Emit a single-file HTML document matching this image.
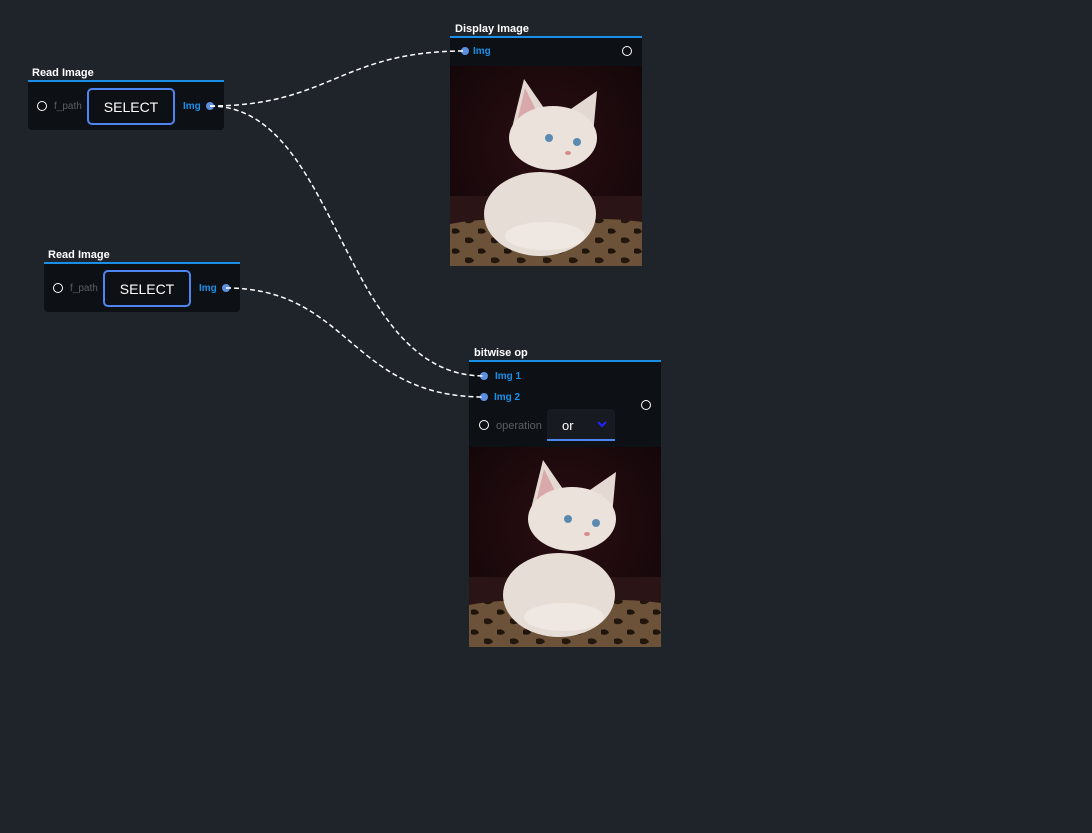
<!DOCTYPE html>
<html><head><style>
body{margin:0;width:1092px;height:833px;background:#1f232a;font-family:"Liberation Sans",sans-serif;position:relative;overflow:hidden}
.t{position:absolute;color:#fff;font-size:11px;font-weight:bold}
.line{position:absolute;height:2px;background:#1a8fe8}
.body{position:absolute;background:#0d1115;border-radius:0 0 4px 4px}
.circ{position:absolute;width:10px;height:10px;border:1.5px solid #fff;border-radius:50%;box-sizing:border-box}
.dot{position:absolute;width:8px;height:8px;background:#5c8fe0;border-radius:50%}
.lbl{position:absolute;font-size:10px;color:#5a5f66}
.blu{position:absolute;font-size:10px;color:#1a8fe8;font-weight:bold}
.btn{position:absolute;border:2px solid #4d86f0;border-radius:5px;color:#fff;font-size:14px;display:flex;align-items:center;justify-content:center;box-sizing:border-box}
svg.wires{position:absolute;left:0;top:0}
</style></head><body>

<div class="t" style="left:32px;top:67px">Read Image</div>
<div class="line" style="left:28px;top:80px;width:196px"></div>
<div class="body" style="left:28px;top:82px;width:196px;height:48px"></div>
<div class="circ" style="left:37px;top:101px"></div>
<div class="lbl" style="left:54px;top:101px">f_path</div>
<div class="btn" style="left:87px;top:88px;width:88px;height:37px">SELECT</div>
<div class="blu" style="left:183px;top:101px">Img</div>
<div class="dot" style="left:206px;top:102px"></div>

<div class="t" style="left:48px;top:249px">Read Image</div>
<div class="line" style="left:44px;top:262px;width:196px"></div>
<div class="body" style="left:44px;top:264px;width:196px;height:48px"></div>
<div class="circ" style="left:53px;top:283px"></div>
<div class="lbl" style="left:70px;top:283px">f_path</div>
<div class="btn" style="left:103px;top:270px;width:88px;height:37px">SELECT</div>
<div class="blu" style="left:199px;top:283px">Img</div>
<div class="dot" style="left:222px;top:284px"></div>

<div class="t" style="left:455px;top:23px">Display Image</div>
<div class="line" style="left:450px;top:36px;width:192px"></div>
<div class="body" style="left:450px;top:38px;width:192px;height:28px;border-radius:0"></div>
<div class="dot" style="left:461px;top:47px"></div>
<div class="blu" style="left:473px;top:46px">Img</div>
<div class="circ" style="left:622px;top:46px"></div>
<svg style="position:absolute;left:450px;top:66px" width="192" height="200" viewBox="0 0 192 200">
<defs><radialGradient id="bg" cx="0.5" cy="0.4" r="0.7"><stop offset="0" stop-color="#2a0e12"/><stop offset="1" stop-color="#120608"/></radialGradient>
<pattern id="leo" width="26" height="20" patternUnits="userSpaceOnUse"><rect width="26" height="20" fill="#6b5238"/><path d="M2 3 Q8 1 10 6 Q6 9 2 7Z" fill="#1e140c"/><path d="M15 12 Q22 10 24 15 Q19 19 15 16Z" fill="#22160d"/></pattern></defs>
<rect width="192" height="200" fill="url(#bg)"/>
<rect y="130" width="192" height="28" fill="#2a1416"/>
<path d="M0 158 Q40 150 96 156 Q150 150 192 156 V200 H0Z" fill="url(#leo)"/>
<ellipse cx="90" cy="148" rx="56" ry="42" fill="#e6ddd6"/>
<ellipse cx="95" cy="170" rx="40" ry="14" fill="#efe8e2"/>
<path d="M60 70 L74 13 L96 45Z M118 45 L147 25 L142 80Z" fill="#e4d8d2"/>
<path d="M66 60 L75 22 L88 48Z" fill="#d9a8ab"/>
<ellipse cx="103" cy="72" rx="44" ry="32" fill="#ebe2dc"/>
<circle cx="99" cy="72" r="4" fill="#5b8ab0"/><circle cx="127" cy="76" r="4" fill="#5b8ab0"/>
<ellipse cx="118" cy="87" rx="3" ry="2" fill="#d98a8c"/>
</svg>

<div class="t" style="left:474px;top:347px">bitwise op</div>
<div class="line" style="left:469px;top:360px;width:192px"></div>
<div class="body" style="left:469px;top:362px;width:192px;height:86px;border-radius:0"></div>
<div class="dot" style="left:480px;top:372px"></div>
<div class="blu" style="left:495px;top:371px">Img 1</div>
<div class="dot" style="left:480px;top:393px"></div>
<div class="blu" style="left:494px;top:392px">Img 2</div>
<div class="circ" style="left:641px;top:400px"></div>
<div class="circ" style="left:479px;top:420px"></div>
<div class="lbl" style="left:496px;top:420px;font-size:11px">operation</div>
<div style="position:absolute;left:547px;top:409px;width:68px;height:30px;background:#171b21;border-bottom:2px solid #4d86f0;border-radius:4px 4px 0 0"></div>
<div style="position:absolute;left:562px;top:418px;color:#fff;font-size:13px">or</div>
<svg style="position:absolute;left:597px;top:420px" width="10" height="8"><path d="M1 2 L5 6 L9 2" stroke="#2222ff" stroke-width="2" fill="none"/></svg>
<svg style="position:absolute;left:469px;top:447px" width="192" height="200" viewBox="0 0 192 200">
<rect width="192" height="200" fill="url(#bg)"/>
<rect y="130" width="192" height="28" fill="#2a1416"/>
<path d="M0 158 Q40 150 96 156 Q150 150 192 156 V200 H0Z" fill="url(#leo)"/>
<ellipse cx="90" cy="148" rx="56" ry="42" fill="#e6ddd6"/>
<ellipse cx="95" cy="170" rx="40" ry="14" fill="#efe8e2"/>
<path d="M60 70 L74 13 L96 45Z M118 45 L147 25 L142 80Z" fill="#e4d8d2"/>
<path d="M66 60 L75 22 L88 48Z" fill="#d9a8ab"/>
<ellipse cx="103" cy="72" rx="44" ry="32" fill="#ebe2dc"/>
<circle cx="99" cy="72" r="4" fill="#5b8ab0"/><circle cx="127" cy="76" r="4" fill="#5b8ab0"/>
<ellipse cx="118" cy="87" rx="3" ry="2" fill="#d98a8c"/>
</svg>

<svg class="wires" width="1092" height="833">
<g stroke="#fff" stroke-width="1.5" fill="none" stroke-dasharray="5,3">
<path d="M210 106 C330 106 340 51 465 51"/>
<path d="M210 106 C340 106 340 376 484 376"/>
<path d="M226 288 C350 288 350 397 484 397"/>
</g>
</svg>
</body></html>
